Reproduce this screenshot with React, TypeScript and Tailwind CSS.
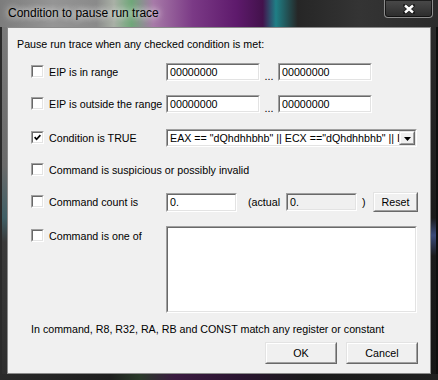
import React from 'react';

const font = "font-['Liberation_Sans',Arial,sans-serif]";

// classic sunken 3D edge (inputs, checkboxes, list boxes)
const Sunken = ({ className = '', inner = '', children }: { className?: string; inner?: string; children?: React.ReactNode }) => (
  <div className={`border border-t-[#a0a0a0] border-l-[#a0a0a0] border-b-white border-r-white ${className}`}>
    <div className={`h-full w-full border border-t-[#696969] border-l-[#696969] border-b-[#e3e3e3] border-r-[#e3e3e3] ${inner}`}>
      {children}
    </div>
  </div>
);

// classic raised 3D edge (push buttons)
const Raised = ({ className = '', inner = '', children }: { className?: string; inner?: string; children?: React.ReactNode }) => (
  <div className={`border border-t-[#e3e3e3] border-l-[#e3e3e3] border-b-[#696969] border-r-[#696969] ${className}`}>
    <div className={`h-full w-full border border-t-white border-l-white border-b-[#a0a0a0] border-r-[#a0a0a0] bg-[#f0f0f0] ${inner}`}>
      {children}
    </div>
  </div>
);

const Check = ({ checked = false }: { checked?: boolean }) => (
  <Sunken className="w-[13px] h-[13px] shrink-0" inner="bg-white flex items-center justify-center">
    {checked && (
      <svg width="7" height="7" viewBox="0 0 7 7">
        <polyline points="0.6,3.2 2.6,5.3 6.4,1.2" fill="none" stroke="#000" strokeWidth="1.7" />
      </svg>
    )}
  </Sunken>
);

const Label = ({ checked, text }: { checked?: boolean; text: string }) => (
  <div className="w-[135px] shrink-0 flex items-center gap-[5px]">
    <Check checked={checked} />
    <span className="whitespace-nowrap">{text}</span>
  </div>
);

const Field = ({ value, className = '', gray = false }: { value: string; className?: string; gray?: boolean }) => (
  <Sunken className={`h-[18px] shrink-0 ${className}`} inner={`${gray ? 'bg-[#f0f0f0]' : 'bg-white'} pl-[2px] leading-[14px] whitespace-nowrap overflow-hidden`}>
    {value}
  </Sunken>
);

const Btn = ({ text, className = '' }: { text: string; className?: string }) => (
  <Raised className={`shrink-0 ${className}`} inner="flex items-center justify-center">
    {text}
  </Raised>
);

export default function App() {
  return (
    <div className={`w-[438px] h-[380px] flex flex-col overflow-hidden bg-[#1c1c1c] text-[10.7px] text-black ${font}`}>
      {/* Title bar (Aero glass) */}
      <div className="h-[27px] shrink-0 flex items-start bg-[linear-gradient(90deg,#7c7c7c_0%,#959595_12%,#8a8a8a_22%,#a9b0a6_26%,#6fa779_30%,#a77aa8_35%,#7b3a86_44%,#5e1a6c_54%,#43124c_60%,#1f7f86_63%,#262626_68%,#343434_82%,#2b2b2b_100%)]">
        <div className="pl-[8px] h-[26px] flex items-center text-[12px] text-black [text-shadow:0_0_6px_rgba(255,255,255,0.9),0_0_10px_rgba(255,255,255,0.6)]">
          Condition to pause run trace
        </div>
        <div className="flex-1" />
        <div className="mr-[5px] w-[49px] h-[18px] rounded-b-[4px] border border-t-0 border-[#8d8d8d] bg-[linear-gradient(180deg,#4a4a4a,#2c2c2c)] flex items-center justify-center shadow-[inset_0_0_0_1px_rgba(0,0,0,0.6)]">
          <svg width="12" height="10" viewBox="0 0 12 10">
            <path d="M2 1.5 L10 8.5 M10 1.5 L2 8.5" stroke="#000" strokeWidth="4" strokeLinecap="square" opacity="0.5" />
            <path d="M2 1.5 L10 8.5 M10 1.5 L2 8.5" stroke="#fff" strokeWidth="2.4" />
          </svg>
        </div>
      </div>

      <div className="flex h-[347px] shrink-0">
        {/* left frame */}
        <div className="w-[7px] shrink-0 border-l-2 border-[#2a2a2a] bg-[linear-gradient(180deg,#7a7a7a_0%,#6a6a6a_40%,#3f5f66_55%,#3a3a3a_62%,#2e2e2e_100%)]" />

        {/* Client area */}
        <div className="w-[424px] shrink-0 border border-[#8a8a8a] bg-[#f0f0f0] flex flex-col pl-[9px]">
          <div className="mt-[7px] h-[18px] flex items-center">Pause run trace when any checked condition is met:</div>

          <div className="ml-[14px] flex flex-col">
            <div className="mt-[10px] h-[18px] flex items-center">
              <Label text="EIP is in range" />
              <Field value="00000000" className="w-[94px]" />
              <span className="w-[18px] self-end text-center leading-[10px]">...</span>
              <Field value="00000000" className="w-[94px]" />
            </div>

            <div className="mt-[14px] h-[18px] flex items-center">
              <Label text="EIP is outside the range" />
              <Field value="00000000" className="w-[94px]" />
              <span className="w-[18px] self-end text-center leading-[10px]">...</span>
              <Field value="00000000" className="w-[94px]" />
            </div>

            <div className="mt-[16px] h-[18px] flex items-center">
              <Label checked text="Condition is TRUE" />
              <Sunken className="w-[251px] h-[18px] shrink-0" inner="bg-white flex">
                <div className="flex-1 overflow-hidden whitespace-nowrap pl-[2px] leading-[14px]">
                  EAX == "dQhdhhbhb" || ECX =="dQhdhhbhb" || I
                </div>
                <Raised className="w-[16px] h-full shrink-0" inner="flex items-center justify-center">
                  <svg width="7" height="4" viewBox="0 0 7 4" className="mt-[1px]">
                    <polygon points="0,0 7,0 3.5,4" fill="#000" />
                  </svg>
                </Raised>
              </Sunken>
            </div>

            <div className="mt-[14px] h-[18px] flex items-center">
              <Label text="Command is suspicious or possibly invalid" />
            </div>

            <div className="mt-[13px] h-[20px] flex items-center">
              <Label text="Command count is" />
              <Field value="0." className="w-[71px] h-[19px]" />
              <span className="w-[49px] pl-[11px] shrink-0 whitespace-nowrap">(actual</span>
              <Field value="0." gray className="w-[71px]" />
              <span className="w-[16px] pl-[5px] shrink-0">)</span>
              <Btn text="Reset" className="w-[45px] h-[20px]" />
            </div>

            <div className="mt-[14px] h-[87px] flex items-start">
              <div className="h-[18px] flex items-center mt-[1px]">
                <Label text="Command is one of" />
              </div>
              <Sunken className="w-[251px] h-[87px] shrink-0" inner="bg-white" />
            </div>

            <div className="mt-[7px] h-[18px] flex items-center">
              In command, R8, R32, RA, RB and CONST match any register or constant
            </div>

            <div className="mt-[4px] flex gap-[9px] pl-[234px]">
              <Btn text="OK" className="w-[72px] h-[22px]" />
              <Btn text="Cancel" className="w-[72px] h-[22px]" />
            </div>
          </div>
        </div>

        {/* right frame */}
        <div className="w-[7px] shrink-0 border-r-2 border-[#0e0e0e] bg-[linear-gradient(180deg,#2a2a2a_0%,#1a1a1a_55%,#3a4a7a_60%,#1a1a1a_66%,#161616_100%)]" />
      </div>

      {/* bottom frame */}
      <div className="flex-1 bg-[linear-gradient(90deg,#2a2a2a_0%,#1e1e1e_25%,#2a3a2a_32%,#3a1a40_40%,#2a1530_55%,#1a1a1a_70%,#202020_100%)]" />
    </div>
  );
}
